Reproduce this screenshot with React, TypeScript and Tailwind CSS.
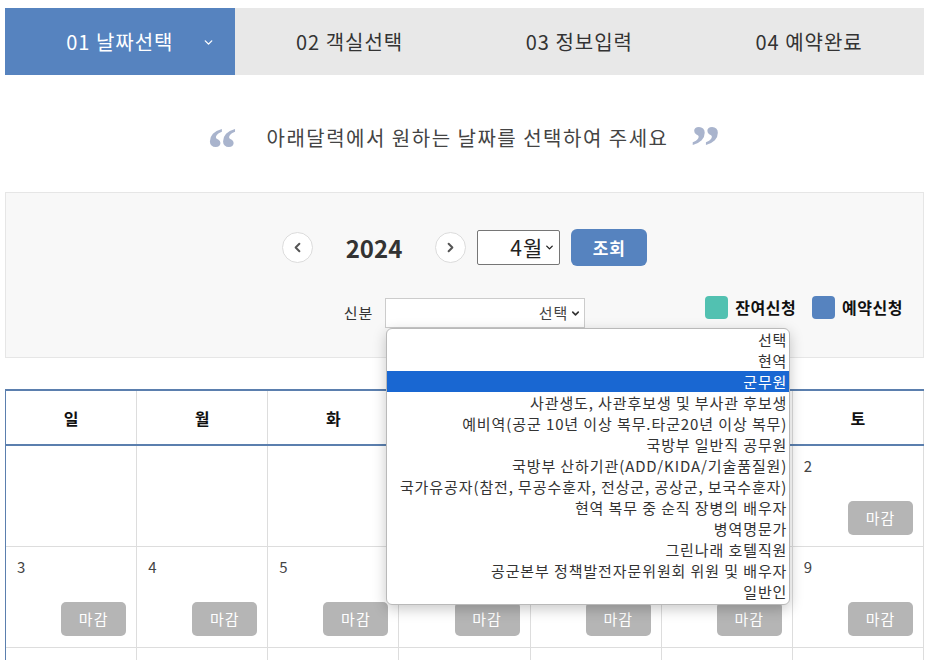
import { ChevronDown, ChevronLeft, ChevronRight } from "lucide-react";

const font = { fontFamily: '"Noto Sans CJK KR", "Noto Sans", sans-serif' };

const steps = ["01 날짜선택", "02 객실선택", "03 정보입력", "04 예약완료"];

const options = [
  "선택",
  "현역",
  "군무원",
  "사관생도, 사관후보생 및 부사관 후보생",
  "예비역(공군 10년 이상 복무.타군20년 이상 복무)",
  "국방부 일반직 공무원",
  "국방부 산하기관(ADD/KIDA/기술품질원)",
  "국가유공자(참전, 무공수훈자, 전상군, 공상군, 보국수훈자)",
  "현역 복무 중 순직 장병의 배우자",
  "병역명문가",
  "그린나래 호텔직원",
  "공군본부 정책발전자문위원회 위원 및 배우자",
  "일반인",
];

const weekDays = ["일", "월", "화", "수", "목", "금", "토"];

// March layout: 1st falls on Friday
const weeks: (number | null)[][] = [
  [null, null, null, null, null, 1, 2],
  [3, 4, 5, 6, 7, 8, 9],
  [10, 11, 12, 13, 14, 15, 16],
];

function DayCell({ day }: { day: number | null }) {
  return (
    <div className="h-[101px] border-r border-b border-[#dddddd] flex flex-col">
      {day !== null && (
        <>
          <div className="pl-[11px] pt-[10px] text-[15px] leading-[20px] text-[#444]">{day}</div>
          <div className="mt-auto self-end mr-[10px] mb-[11px] w-[65px] h-[34px] rounded-[5px] bg-[#b5b5b5] text-white text-[15px] tracking-[1px] flex items-center justify-center">
            마감
          </div>
        </>
      )}
    </div>
  );
}

export default function App() {
  return (
    <div className="w-[929px] bg-white px-[5px] pt-[8px] pb-[40px]" style={font}>
      {/* Step tabs */}
      <div className="flex h-[67px]">
        {steps.map((s, i) => (
          <div
            key={s}
            className={`relative flex-1 flex items-center justify-center text-[20px] tracking-[1px] ${
              i === 0 ? "bg-[#5683bf] text-white" : "bg-[#e8e8e8] text-[#333]"
            }`}
          >
            {s}
            {i === 0 && (
              <ChevronDown className="absolute right-[20px] top-[28px]" size={13} strokeWidth={2.5} />
            )}
          </div>
        ))}
      </div>

      {/* Guide text */}
      <div className="h-[117px] flex items-center justify-center pt-[8px] text-[20px] tracking-[1.5px] text-[#444]">
        <span
          className="text-[60px] leading-none font-bold text-[#a9b4cd] mr-[28px] -mt-[4px] h-[34px]"
          style={{ fontFamily: '"Liberation Serif", serif' }}
        >
          &ldquo;
        </span>
        <span>아래달력에서 원하는 날짜를 선택하여 주세요</span>
        <span
          className="text-[60px] leading-none font-bold text-[#a9b4cd] ml-[22px] -mt-[10px] h-[34px]"
          style={{ fontFamily: '"Liberation Serif", serif' }}
        >
          &rdquo;
        </span>
      </div>

      {/* Search box */}
      <div className="border border-[#e6e6e6] bg-[#f8f8f8] pt-[36px] pb-[29px]">
        <div className="flex items-center justify-center h-[37px]">
          <div className="w-[31px] h-[31px] rounded-full border border-[#dcdcdc] bg-white flex items-center justify-center text-[#555]">
            <ChevronLeft size={15} strokeWidth={3.2} />
          </div>
          <div className="mx-[33px] text-[24px] font-bold text-[#333]">2024</div>
          <div className="w-[31px] h-[31px] rounded-full border border-[#dcdcdc] bg-white flex items-center justify-center text-[#555]">
            <ChevronRight size={15} strokeWidth={3.2} />
          </div>
          <div className="ml-[11px] w-[83px] h-[35px] border border-[#767676] rounded-[2px] bg-white flex items-center justify-end pr-[4px] text-[#222]">
            <span className="text-[21px] tracking-[1px]">4월</span>
            <ChevronDown className="ml-[1px]" size={11} strokeWidth={3} />
          </div>
          <div className="ml-[11px] w-[76px] h-[37px] rounded-[6px] bg-[#5683bf] text-white text-[17px] tracking-[1px] font-bold flex items-center justify-center">
            조회
          </div>
        </div>

        <div className="grid grid-cols-[1fr_auto_1fr] items-start mt-[29px]">
          <div />
          <div className="flex items-center mt-[3px]">
            <span className="text-[15px] tracking-[1px] text-[#333] mr-[12px]">신분</span>
            <div className="relative">
              <div className="w-[200px] h-[30px] border border-[#cccccc] bg-white flex items-center justify-end pr-[3px] text-[15px] tracking-[1px] text-[#444]">
                <span>선택</span>
                <ChevronDown className="ml-[2px] text-[#333]" size={11} strokeWidth={3.5} />
              </div>
              {/* open option list */}
              <div className="absolute left-[1px] top-[30px] z-10 w-[404px] rounded-[6px] border border-[#b9b9b9] bg-white shadow-[0_4px_14px_rgba(0,0,0,0.22)] pb-[2px] overflow-hidden">
                {options.map((o, i) => (
                  <div
                    key={o}
                    className={`h-[21px] leading-[21px] text-right pr-[2px] text-[15px] tracking-[0.9px] whitespace-nowrap ${
                      i === 2 ? "bg-[#1967d2] text-white" : "text-[#333]"
                    }`}
                  >
                    {o}
                  </div>
                ))}
              </div>
            </div>
          </div>
          <div className="flex justify-end items-center pr-[20px] gap-[16px] text-[16px] tracking-[0.5px] font-bold text-[#111]">
            <div className="flex items-center gap-[7px]">
              <span className="w-[23px] h-[23px] rounded-[4px] bg-[#52c1b1]" />
              잔여신청
            </div>
            <div className="flex items-center gap-[7px]">
              <span className="w-[23px] h-[23px] rounded-[4px] bg-[#5683bf]" />
              예약신청
            </div>
          </div>
        </div>
      </div>

      {/* Calendar */}
      <div className="mt-[31px] border-t-2 border-l border-[#5b7fae]">
        <div className="grid grid-cols-7 border-b-2 border-[#5b7fae]">
          {weekDays.map((d) => (
            <div
              key={d}
              className="h-[53px] border-r border-[#dddddd] flex items-center justify-center text-[16px] font-bold text-[#111]"
            >
              {d}
            </div>
          ))}
        </div>
        <div>
          {weeks.map((w, wi) => (
            <div key={wi} className="grid grid-cols-7">
              {w.map((d, di) => (
                <DayCell key={di} day={d} />
              ))}
            </div>
          ))}
        </div>
      </div>
    </div>
  );
}
